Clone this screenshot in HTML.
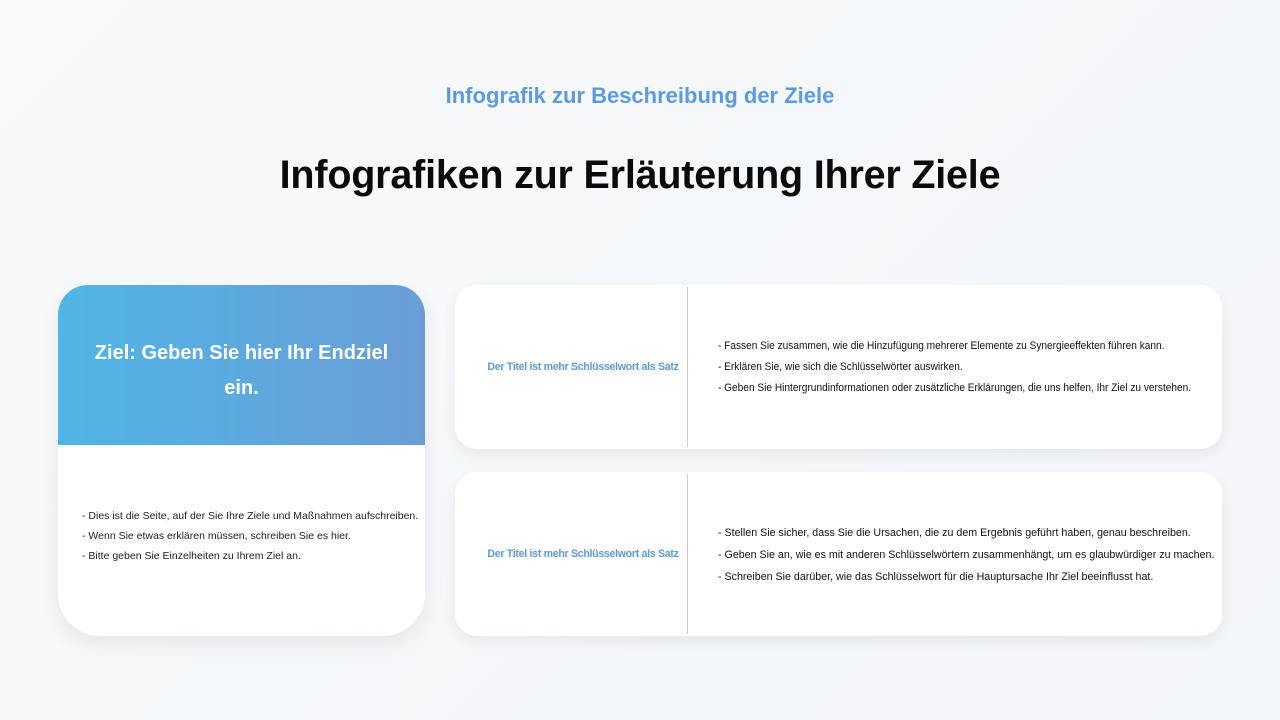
<!DOCTYPE html>
<html><head><meta charset="utf-8"><style>
body{margin:0;width:1280px;height:720px;background:linear-gradient(135deg,#f7f9fa,#f3f6f9);font-family:"Liberation Sans",sans-serif;position:relative;overflow:hidden}
.t1{position:absolute;top:83px;left:0;width:1280px;text-align:center;color:#5b9ae4;font-size:22px;font-weight:bold}
.t2{position:absolute;top:153px;left:0;width:1280px;text-align:center;color:#0b0b0b;font-size:39.5px;font-weight:bold;letter-spacing:-0.2px}
.left{position:absolute;left:58px;top:285px;width:367px;height:351px;background:#fff;border-radius:30px 30px 42px 42px;overflow:hidden;box-shadow:0 8px 20px rgba(0,0,0,0.07)}
.lh{height:148px;padding-top:12px;background:linear-gradient(90deg,#4fb5e6,#6a9dd6);color:#fff;font-weight:bold;font-size:20px;text-align:center;display:flex;align-items:center;justify-content:center;line-height:35px;padding-left:30px;padding-right:30px}
.lb{position:absolute;top:221px;left:24px;font-size:10.5px;color:#222;line-height:20px}
.card{position:absolute;left:455px;width:767px;height:164px;background:#fff;border-radius:22px;box-shadow:0 6px 14px rgba(0,0,0,0.06)}
.card .k{position:absolute;left:24px;top:0;width:208px;height:100%;display:flex;align-items:center;justify-content:center;color:#5b9ae4;font-size:10.6px;font-weight:bold;letter-spacing:-0.3px}
.card .d{position:absolute;left:232px;top:2px;width:1px;height:160px;background:#ccc}
.card .tx{position:absolute;left:263px;font-size:11px;color:#111;line-height:21px;white-space:nowrap;transform:scaleX(0.92);transform-origin:0 0}
</style></head><body>
<div class="t1">Infografik zur Beschreibung der Ziele</div>
<div class="t2">Infografiken zur Erläuterung Ihrer Ziele</div>
<div class="left"><div class="lh">Ziel: Geben Sie hier Ihr Endziel ein.</div>
<div class="lb">- Dies ist die Seite, auf der Sie Ihre Ziele und Maßnahmen aufschreiben.<br>- Wenn Sie etwas erklären müssen, schreiben Sie es hier.<br>- Bitte geben Sie Einzelheiten zu Ihrem Ziel an.</div></div>
<div class="card" style="top:285px"><div class="k">Der Titel ist mehr Schlüsselwort als Satz</div><div class="d"></div>
<div class="tx" style="top:51px">- Fassen Sie zusammen, wie die Hinzufügung mehrerer Elemente zu Synergieeffekten führen kann.<br>- Erklären Sie, wie sich die Schlüsselwörter auswirken.<br>- Geben Sie Hintergrundinformationen oder zusätzliche Erklärungen, die uns helfen, Ihr Ziel zu verstehen.</div></div>
<div class="card" style="top:472px"><div class="k">Der Titel ist mehr Schlüsselwort als Satz</div><div class="d"></div>
<div class="tx" style="top:50px;line-height:22px;transform:scaleX(0.97)">- Stellen Sie sicher, dass Sie die Ursachen, die zu dem Ergebnis geführt haben, genau beschreiben.<br>- Geben Sie an, wie es mit anderen Schlüsselwörtern zusammenhängt, um es glaubwürdiger zu machen.<br>- Schreiben Sie darüber, wie das Schlüsselwort für die Hauptursache Ihr Ziel beeinflusst hat.</div></div>
</body></html>
